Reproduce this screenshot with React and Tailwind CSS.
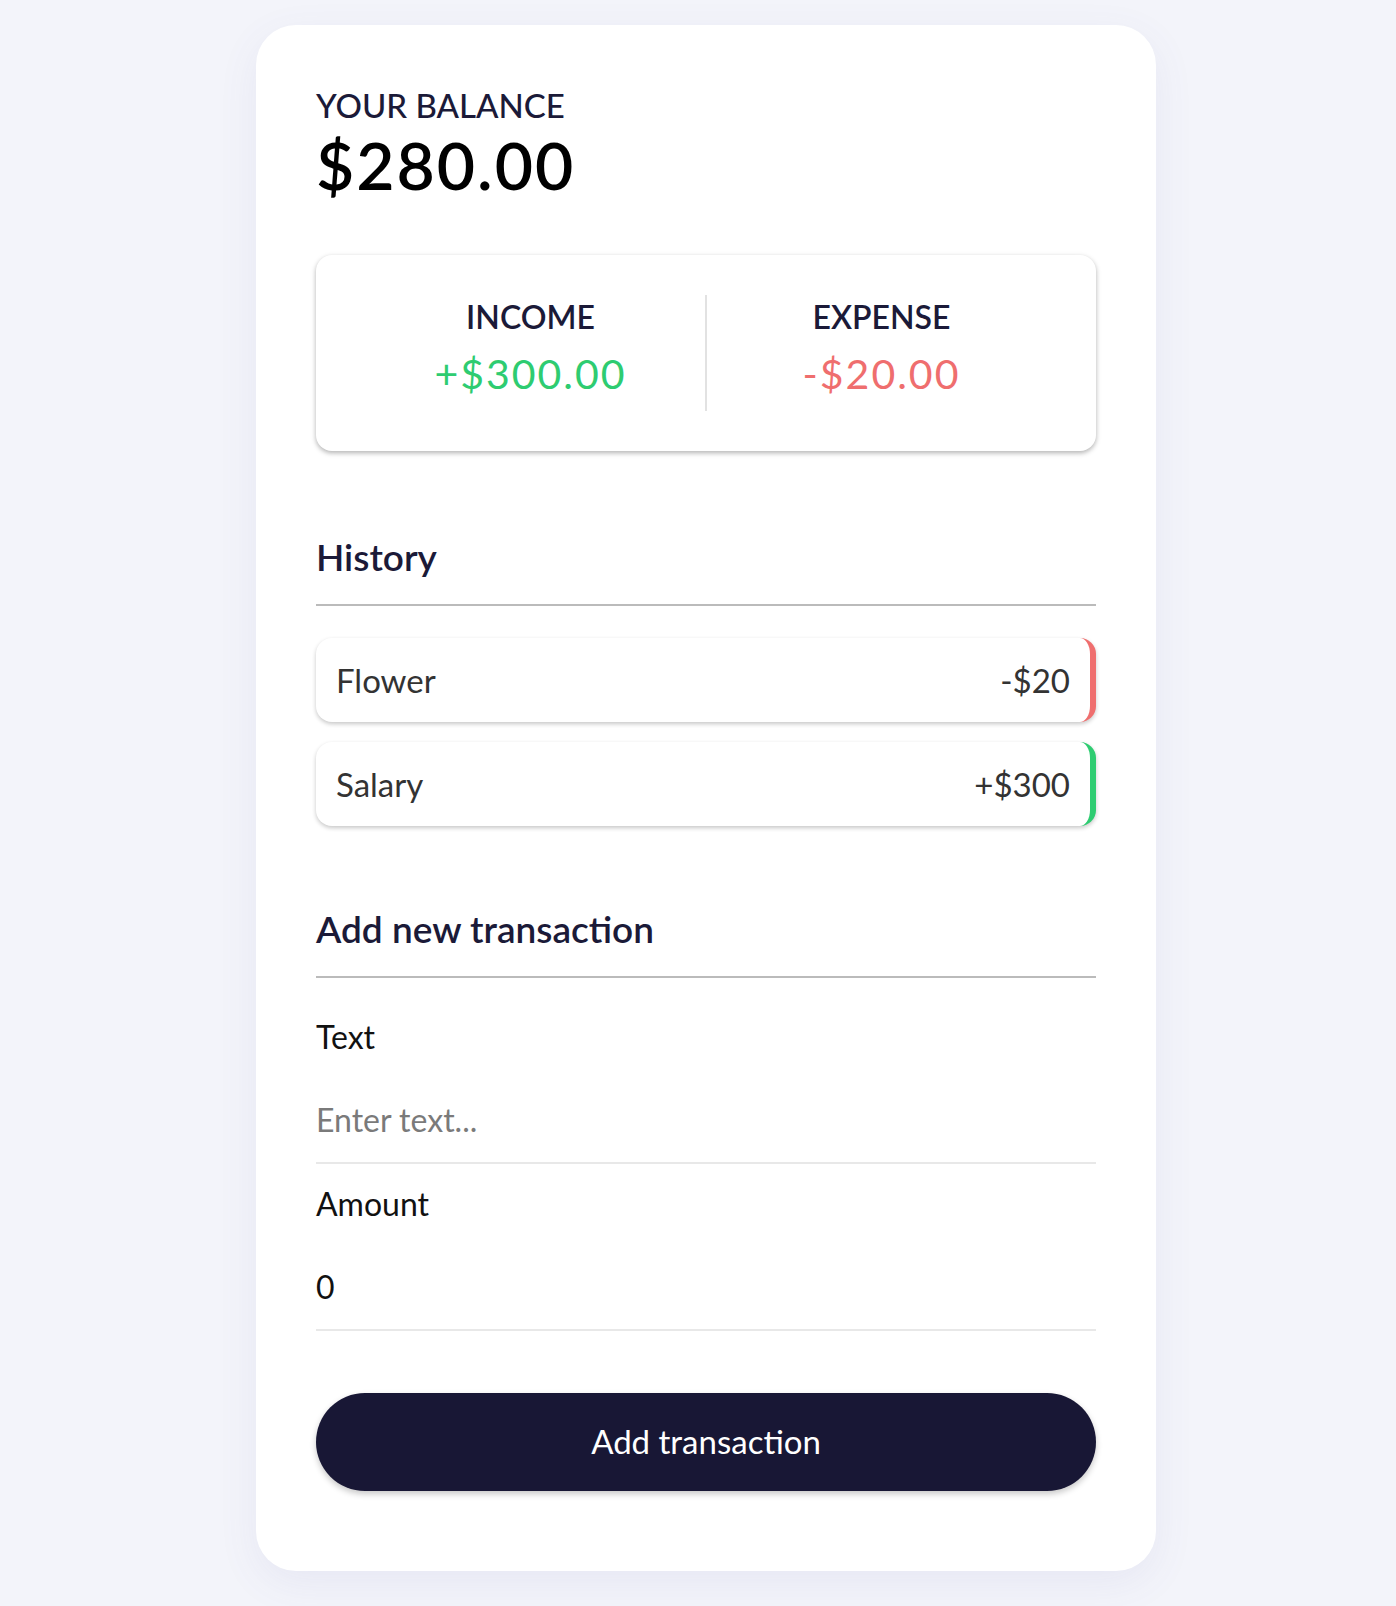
import { useState } from "react";

const transactions = [
  { id: 1, text: "Flower", amount: -20 },
  { id: 2, text: "Salary", amount: 300 },
];

const App = () => {
  const [text, setText] = useState("");
  const [amount, setAmount] = useState(0);

  const income = transactions
    .filter((t) => t.amount > 0)
    .reduce((acc, t) => acc + t.amount, 0);
  const expense = transactions
    .filter((t) => t.amount < 0)
    .reduce((acc, t) => acc + t.amount, 0);
  const balance = income + expense;

  return (
    <div className="min-h-screen bg-[#f3f4fa] pt-[25px] pb-[35px] pl-[16px] flex justify-center font-['Lato',sans-serif]">
      <div className="w-[900px] bg-white rounded-[40px] shadow-[0_12px_40px_rgba(90,90,170,0.08)] px-[60px] pt-[60px] pb-[79px]">
        {/* Balance */}
        <h4 className="text-[33px] leading-[40px] font-medium uppercase text-[#1b1a38]">
          Your Balance
        </h4>
        <h1 className="text-[66px] leading-[80px] font-semibold tracking-[2px] text-black">
          ${balance.toFixed(2)}
        </h1>

        {/* Income / Expense */}
        <div className="mt-[50px] flex rounded-[16px] bg-white px-[40px] py-[40px] shadow-[0_2px_6px_rgba(0,0,0,0.12),0_2px_4px_rgba(0,0,0,0.2)]">
          <div className="flex-1 text-center border-r-2 border-[#e2e2e2]">
            <h4 className="text-[32px] leading-[44px] font-semibold uppercase text-[#1b1a38]">
              Income
            </h4>
            <p className="mt-[11px] mb-[13px] text-[41px] leading-[48px] tracking-[2px] text-[#2ecc71]">
              +${income.toFixed(2)}
            </p>
          </div>
          <div className="flex-1 text-center">
            <h4 className="text-[32px] leading-[44px] font-semibold uppercase text-[#1b1a38]">
              Expense
            </h4>
            <p className="mt-[11px] mb-[13px] text-[41px] leading-[48px] tracking-[2px] text-[#ef6e6e]">
              -${Math.abs(expense).toFixed(2)}
            </p>
          </div>
        </div>

        {/* History */}
        <h3 className="mt-[84px] text-[37px] leading-[44px] font-semibold text-[#1b1a38] pb-[25px] border-b-2 border-[#bbbbbb]">
          History
        </h3>
        <ul className="mt-[32px] flex flex-col gap-[20px]">
          {transactions.map((t) => (
            <li
              key={t.id}
              className={`flex justify-between items-center bg-white rounded-[16px] px-[20px] py-[20px] text-[33px] leading-[44px] text-[#333] shadow-[0_2px_4px_rgba(0,0,0,0.22)] border-r-[6px] ${
                t.amount < 0 ? "border-[#ef6e6e]" : "border-[#2ecc71]"
              }`}
            >
              <span>{t.text}</span>
              <span>
                {t.amount < 0 ? "-" : "+"}${Math.abs(t.amount)}
              </span>
            </li>
          ))}
        </ul>

        {/* Add new transaction */}
        <h3 className="mt-[81px] text-[37px] leading-[44px] font-semibold text-[#1b1a38] pb-[25px] border-b-2 border-[#bbbbbb]">
          Add new transaction
        </h3>
        <form onSubmit={(e) => e.preventDefault()}>
          <label className="block mt-[39px] mb-[20px] text-[32px] leading-[40px] text-[#111]">
            Text
          </label>
          <input
            type="text"
            value={text}
            onChange={(e) => setText(e.target.value)}
            placeholder="Enter text..."
            className="block w-full h-[87px] text-[32px] text-[#111] placeholder:text-[#7a7a7a] border-b-2 border-[#e8e8e8] outline-none bg-transparent"
          />
          <label className="block mt-[20px] mb-[20px] text-[32px] leading-[40px] text-[#111]">
            Amount
          </label>
          <input
            type="number"
            value={amount}
            onChange={(e) => setAmount(e.target.value)}
            className="block w-full h-[87px] text-[32px] text-[#111] border-b-2 border-[#e8e8e8] outline-none bg-transparent"
          />
          <button
            type="submit"
            className="mt-[62px] w-full h-[98px] rounded-full bg-[#181735] text-white text-[33px] shadow-[0_3px_6px_rgba(0,0,0,0.22)]"
          >
            Add transaction
          </button>
        </form>
      </div>
    </div>
  );
};

export default App;
